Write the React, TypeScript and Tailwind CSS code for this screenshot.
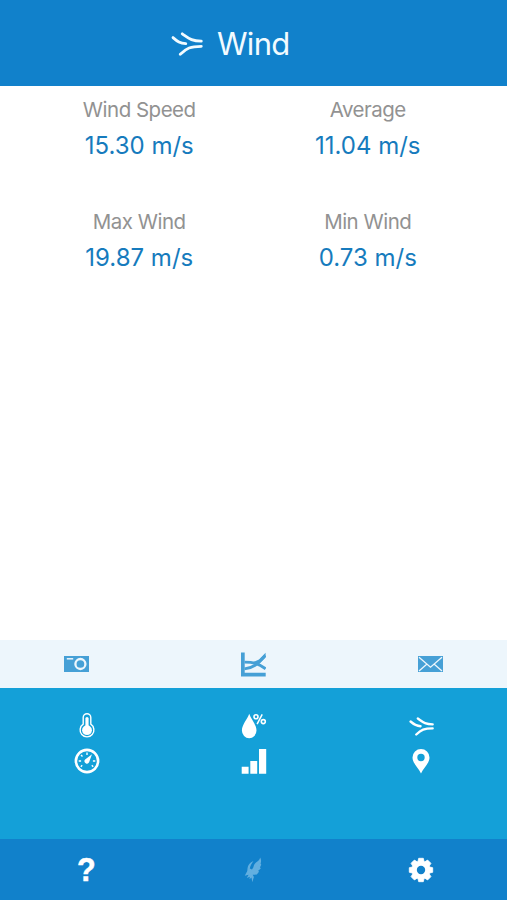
import type { ReactNode } from 'react';

interface Reading {
  label: string;
  value: string;
}

const readings: Reading[] = [
  { label: 'Wind Speed', value: '15.30 m/s' },
  { label: 'Average', value: '11.04 m/s' },
  { label: 'Max Wind', value: '19.87 m/s' },
  { label: 'Min Wind', value: '0.73 m/s' },
];

function WindIcon({ className }: { className?: string }) {
  return (
    <svg viewBox="0 0 32 24" className={className} fill="none" stroke="currentColor" strokeLinecap="round">
      <path d="M2 5.6C6.5 9.6 9 11.3 14.8 11.7" />
      <path d="M11.3 1.8C18 6.5 20.5 9.2 30.3 9.2" />
      <path d="M9.3 22.2C15.5 16.2 19.5 14.3 30.3 14.3" />
    </svg>
  );
}

function CameraIcon() {
  return (
    <svg viewBox="0 0 25 16" className="h-4 w-[25px]">
      <path d="M0 0h25v16H0z" fill="currentColor" />
      <path d="M2.8 2.8h6.4" stroke="#edf6fc" strokeWidth="1.5" />
      <circle cx="16.4" cy="8" r="5" fill="none" stroke="#edf6fc" strokeWidth="2.3" />
    </svg>
  );
}

function ChartIcon() {
  return (
    <svg viewBox="0 0 25 25" className="size-[25px]" fill="none" stroke="currentColor">
      <path d="M0 .5h3.7v20.3h21v3.7H0z" fill="currentColor" stroke="none" />
      <path d="M3.5 16.8C12 16 16.5 12.5 24.3 3.5" strokeWidth="2.8" />
      <path d="M3.5 10.2C12 10.2 17 11 24.6 16.8" strokeWidth="2.8" />
      <path d="M11 10.5L18 7.5L24.6 .8V5.5L17.5 12.5z" fill="currentColor" stroke="none" />
    </svg>
  );
}

function MailIcon() {
  return (
    <svg viewBox="0 0 25 16" className="h-4 w-[25px]">
      <path d="M0 0h25v16H0z" fill="currentColor" />
      <path d="M1 1.2L12.5 11.2L24 1.2M1 15L9 8M24 15L16 8" fill="none" stroke="#edf6fc" strokeWidth="1.3" />
    </svg>
  );
}

function ThermometerIcon() {
  return (
    <svg viewBox="0 0 16 26" className="h-[26px] w-4" fill="none" stroke="currentColor">
      <path d="M4.2 11.2V4.5a3.8 3.8 0 0 1 7.6 0v6.7a6.9 6.9 0 1 1-7.6 0z" strokeWidth="1.4" />
      <circle cx="8" cy="17.2" r="4.9" fill="currentColor" stroke="none" />
      <path d="M8 5.5V17" strokeWidth="3.2" strokeLinecap="round" />
    </svg>
  );
}

function GaugeIcon() {
  return (
    <svg viewBox="0 0 26 26" className="size-[26px]" fill="none" stroke="currentColor">
      <circle cx="13" cy="13" r="11.1" strokeWidth="2.6" />
      <path d="M13 4.5v2.4M7 7l1.5 1.5M4.7 13h2.4M18.9 13h2.4M6.8 18.7l1.4-1.4M19.2 18.7l-1.4-1.4" strokeWidth="1.4" />
      <path d="M18 6.3L15.1 14.2A2.4 2.4 0 1 1 11.1 11.6z" fill="currentColor" stroke="none" />
    </svg>
  );
}

function HumidityIcon() {
  return (
    <svg viewBox="0 0 26 26" className="size-[26px]">
      <path d="M8.2.8C9.8 6 15.5 11.6 15.5 17.6a7.3 7.6 0 0 1-14.6 0C.9 11.6 6.6 6 8.2.8z" fill="currentColor" />
      <g fill="none" stroke="currentColor">
        <circle cx="15" cy="3.7" r="2" strokeWidth="1.6" />
        <circle cx="22.3" cy="8.6" r="2" strokeWidth="1.6" />
        <path d="M21.2 1.3L16.1 11.1" strokeWidth="1.5" />
      </g>
    </svg>
  );
}

function BarsIcon() {
  return (
    <svg viewBox="0 0 26 26" className="size-[26px]" fill="currentColor">
      <path d="M.7 18.7h6.9v7H.7zM9.3 13h6.9v12.7H9.3zM18 1h7.2v24.7H18z" />
    </svg>
  );
}

function PinIcon() {
  return (
    <svg viewBox="0 0 18 26" className="h-[26px] w-[18px]" fill="currentColor" fillRule="evenodd">
      <path d="M9 1a8.5 8.5 0 0 1 8.5 8.5C17.5 15 12 19.5 9 25.4C6 19.5.5 15 .5 9.5A8.5 8.5 0 0 1 9 1zM9 5.8a3.7 3.7 0 1 0 0 7.4a3.7 3.7 0 0 0 0-7.4z" />
    </svg>
  );
}

function BirdIcon() {
  return (
    <svg viewBox="0 0 18 26" className="h-[26px] w-[18px]" fill="currentColor">
      <path d="M16.2 .5C15.5 3 14 4.3 12 5.5C10.5 6.5 9.8 8.3 9.4 10.3L8 12.5L5.8 11.5C6.3 8.5 7.8 6.5 9.5 4C6 5.5 3.8 8 3.5 11.2C3.3 13.3 3.5 14.2 2.3 15.8L.8 18.8L4.6 17.7L2.8 21L5.8 19.8L5.5 22.2L7.5 20.5L8.3 25.3L9.9 20L8.7 17.8L12.8 17.6L15 14.8L14.2 13.8L16.8 11.5L16 10.3L17.3 7.8L16.6 6.5C17.4 4.5 17.2 2.5 16.2 .5z" />
    </svg>
  );
}

function GearIcon() {
  return (
    <svg viewBox="-13 -13 26 26" className="size-[26px]">
      <g fill="currentColor" stroke="currentColor" strokeWidth=".8" strokeLinejoin="round">
        {[0, 45, 90, 135].map((angle) => (
          <path key={angle} d="M-3.2-8L-2.3-11.7H2.3L3.2-8V8L2.3 11.7H-2.3L-3.2 8z" transform={`rotate(${angle})`} />
        ))}
        <circle r="8.8" />
      </g>
      <circle r="4.2" fill="#1181cb" />
    </svg>
  );
}

function NavButton({ label, children }: { label: string; children: ReactNode }) {
  return (
    <button aria-label={label} className="flex h-[26px] items-center justify-center">
      {children}
    </button>
  );
}

export default function App() {
  return (
    <div className="flex h-[900px] w-[507px] flex-col overflow-hidden bg-white font-['Inter',sans-serif]">
      <header className="flex h-[86px] items-center gap-[14px] bg-[#1181cb] pl-[171px] text-[#f2fbff]">
        <WindIcon className="mt-px h-6 w-8 stroke-[2.8]" />
        <h1 className="mt-px text-[31px] leading-none tracking-[-0.7px]">Wind</h1>
      </header>

      <main className="grid flex-1 auto-rows-[112px] grid-cols-2 px-[25px] pt-[9px]">
        {readings.map((reading) => (
          <div key={reading.label} className="flex flex-col items-center">
            <p className="text-[20.5px] leading-[30px] tracking-[-0.5px] text-[#929292]">{reading.label}</p>
            <p className="mt-1.5 text-[24px] leading-[30px] text-[#167bbd]">{reading.value}</p>
          </div>
        ))}
      </main>

      <div className="flex h-12 items-center justify-between bg-[#edf6fc] px-16 text-[#46a0d6]">
        <CameraIcon />
        <ChartIcon />
        <MailIcon />
      </div>

      <nav className="grid h-[151px] auto-rows-[26px] grid-cols-3 gap-y-[9px] bg-[#14a0d8] pt-[25px] pr-[2px] pl-[3px] text-white">
        <NavButton label="Temperature"><ThermometerIcon /></NavButton>
        <NavButton label="Humidity"><HumidityIcon /></NavButton>
        <NavButton label="Wind"><WindIcon className="h-[19px] w-[25px] stroke-[3]" /></NavButton>
        <NavButton label="Pressure"><GaugeIcon /></NavButton>
        <NavButton label="Signal"><BarsIcon /></NavButton>
        <NavButton label="Location"><PinIcon /></NavButton>
      </nav>

      <footer className="grid h-[61px] grid-cols-3 items-center bg-[#1181cb] pr-[2px] pl-[3px] text-white">
        <NavButton label="Help">
          <span className="-mt-px scale-x-90 font-['Liberation_Sans',sans-serif] text-[34px] leading-none font-bold [-webkit-text-stroke:0.5px_white]">?</span>
        </NavButton>
        <div className="flex justify-center pr-px text-[#62afe0]"><BirdIcon /></div>
        <NavButton label="Settings"><GearIcon /></NavButton>
      </footer>
    </div>
  );
}
